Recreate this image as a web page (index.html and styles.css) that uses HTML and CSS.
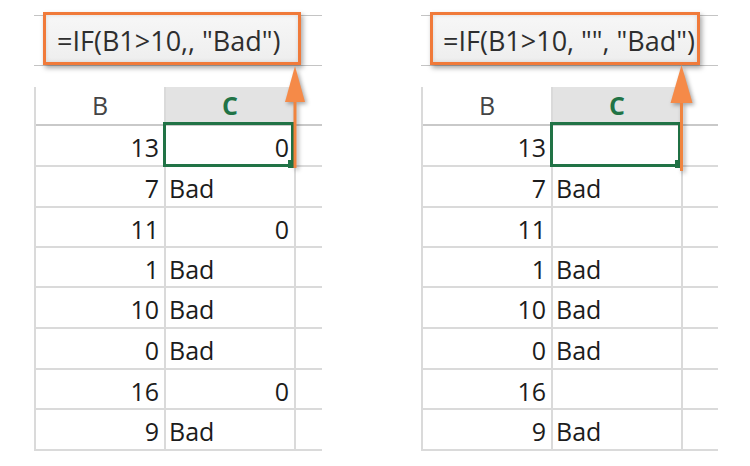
FILE: index.html
```html
<!DOCTYPE html>
<html lang="en">
<head>
<meta charset="utf-8">
<title>IF formula examples</title>
<link rel="stylesheet" href="styles.css">
</head>
<body>
<div class="stage">
  <div class="panel panel-left">
    <div class="fbar"><div class="formula formula-left">=IF(B1&gt;10,, "Bad")</div></div>
    <div class="sheet sheet-left">
      <div class="hd">B</div><div class="hd hd-sel">C</div><div class="hd hd-x"></div>
      <div class="c num r1">13</div><div class="c num sel r1">0</div><div class="c x r1"></div>
      <div class="c num r2">7</div><div class="c txt r2">Bad</div><div class="c x r2"></div>
      <div class="c num r3">11</div><div class="c num r3">0</div><div class="c x r3"></div>
      <div class="c num r4">1</div><div class="c txt r4">Bad</div><div class="c x r4"></div>
      <div class="c num r5">10</div><div class="c txt r5">Bad</div><div class="c x r5"></div>
      <div class="c num r6">0</div><div class="c txt r6">Bad</div><div class="c x r6"></div>
      <div class="c num r7">16</div><div class="c num r7">0</div><div class="c x r7"></div>
      <div class="c num r8">9</div><div class="c txt r8">Bad</div><div class="c x r8"></div>
    </div>
    <svg class="arrow arrow-left" width="40" height="180" viewBox="0 0 40 180">
      <rect x="10.5" y="30" width="3" height="74" fill="#f0843f"/>
      <polygon points="12,2 2,38 22,38" fill="#f58a48"/>
    </svg>
  </div>

  <div class="panel panel-right">
    <div class="fbar"><div class="formula formula-right">=IF(B1&gt;10, "", "Bad")</div></div>
    <div class="sheet sheet-right">
      <div class="hd">B</div><div class="hd hd-sel">C</div><div class="hd hd-x"></div>
      <div class="c num r1">13</div><div class="c num sel r1"></div><div class="c x r1"></div>
      <div class="c num r2">7</div><div class="c txt r2">Bad</div><div class="c x r2"></div>
      <div class="c num r3">11</div><div class="c num r3"></div><div class="c x r3"></div>
      <div class="c num r4">1</div><div class="c txt r4">Bad</div><div class="c x r4"></div>
      <div class="c num r5">10</div><div class="c txt r5">Bad</div><div class="c x r5"></div>
      <div class="c num r6">0</div><div class="c txt r6">Bad</div><div class="c x r6"></div>
      <div class="c num r7">16</div><div class="c num r7"></div><div class="c x r7"></div>
      <div class="c num r8">9</div><div class="c txt r8">Bad</div><div class="c x r8"></div>
    </div>
    <svg class="arrow arrow-right" width="40" height="180" viewBox="0 0 40 180">
      <rect x="11" y="30" width="3" height="76" fill="#f0843f"/>
      <polygon points="12.5,0 1.5,38 23.5,38" fill="#f58a48"/>
    </svg>
  </div>
</div>
</body>
</html>
```

FILE: styles.css
```css
* { box-sizing: border-box; }

html, body {
  margin: 0;
  padding: 0;
  background: #ffffff;
}

body {
  width: 750px;
  height: 466px;
  overflow: hidden;
  font-family: "Open Sans", "Noto Sans", sans-serif;
  color: #1c1c1c;
}

.stage {
  display: flex;
  padding-left: 34px;
}

.panel {
  position: relative;
  padding-top: 15px;
}

.panel-left { width: 288px; }
.panel-right { width: 297px; margin-left: 99px; }

/* formula bar */
.fbar {
  height: 51px;
  border-top: 1px solid #c4c4c4;
  border-bottom: 1px solid #c4c4c4;
  padding-left: 9px;
  display: flex;
  align-items: flex-start;
}

.formula {
  margin-top: -4px;
  height: 53px;
  border: 3px solid #f07a3a;
  background: linear-gradient(#f7f7f7, #eeeeee);
  box-shadow: 2px 3px 5px rgba(0, 0, 0, 0.35), inset 0 0 4px rgba(0, 0, 0, 0.12);
  font-size: 27px;
  line-height: 1;
  color: #2e2e2e;
  padding-top: 12px;
  white-space: nowrap;
}

.formula-left { width: 258px; padding-left: 11px; }
.formula-right { width: 270px; padding-left: 10px; }

/* sheet */
.sheet {
  margin-top: 21px;
  display: grid;
  border-left: 2px solid #dadada;
  grid-template-rows: 39px 41px 41px 40px 40px 41px 41px 40px 41px;
}

.sheet-left { grid-template-columns: 130px 130px 26px; }
.sheet-right { grid-template-columns: 130px 130px 35px; }

.hd {
  border-bottom: 2px solid #c9c9c9;
  border-right: 2px solid #dadada;
  font-size: 25px;
  line-height: 37px;
  text-align: center;
  color: #444444;
}

.hd-sel {
  background: #e3e3e3;
  color: #217346;
  font-weight: 700;
}

.hd-x { border-right: none; }

.c {
  border-bottom: 2px solid #dadada;
  border-right: 2px solid #dadada;
  font-size: 25px;
  line-height: 39px;
  padding-top: 2px;
  white-space: nowrap;
}

.c.x { border-right: none; }

.num { text-align: right; padding-right: 5px; }
.txt { text-align: left; padding-left: 3px; }

.sel { position: relative; }

.sel::after {
  content: "";
  position: absolute;
  top: -4px;
  left: -3px;
  right: 0;
  bottom: -2px;
  border: 3px solid #217346;
}

.sel::before {
  content: "";
  position: absolute;
  right: -2px;
  bottom: -3px;
  width: 8px;
  height: 8px;
  background: #217346;
  z-index: 1;
}

/* annotation arrows */
.arrow {
  position: absolute;
  filter: drop-shadow(2px 2px 2px rgba(0, 0, 0, 0.35));
  z-index: 2;
}

.arrow-left { left: 249px; top: 64px; }
.arrow-right { left: 248px; top: 65px; }
```
